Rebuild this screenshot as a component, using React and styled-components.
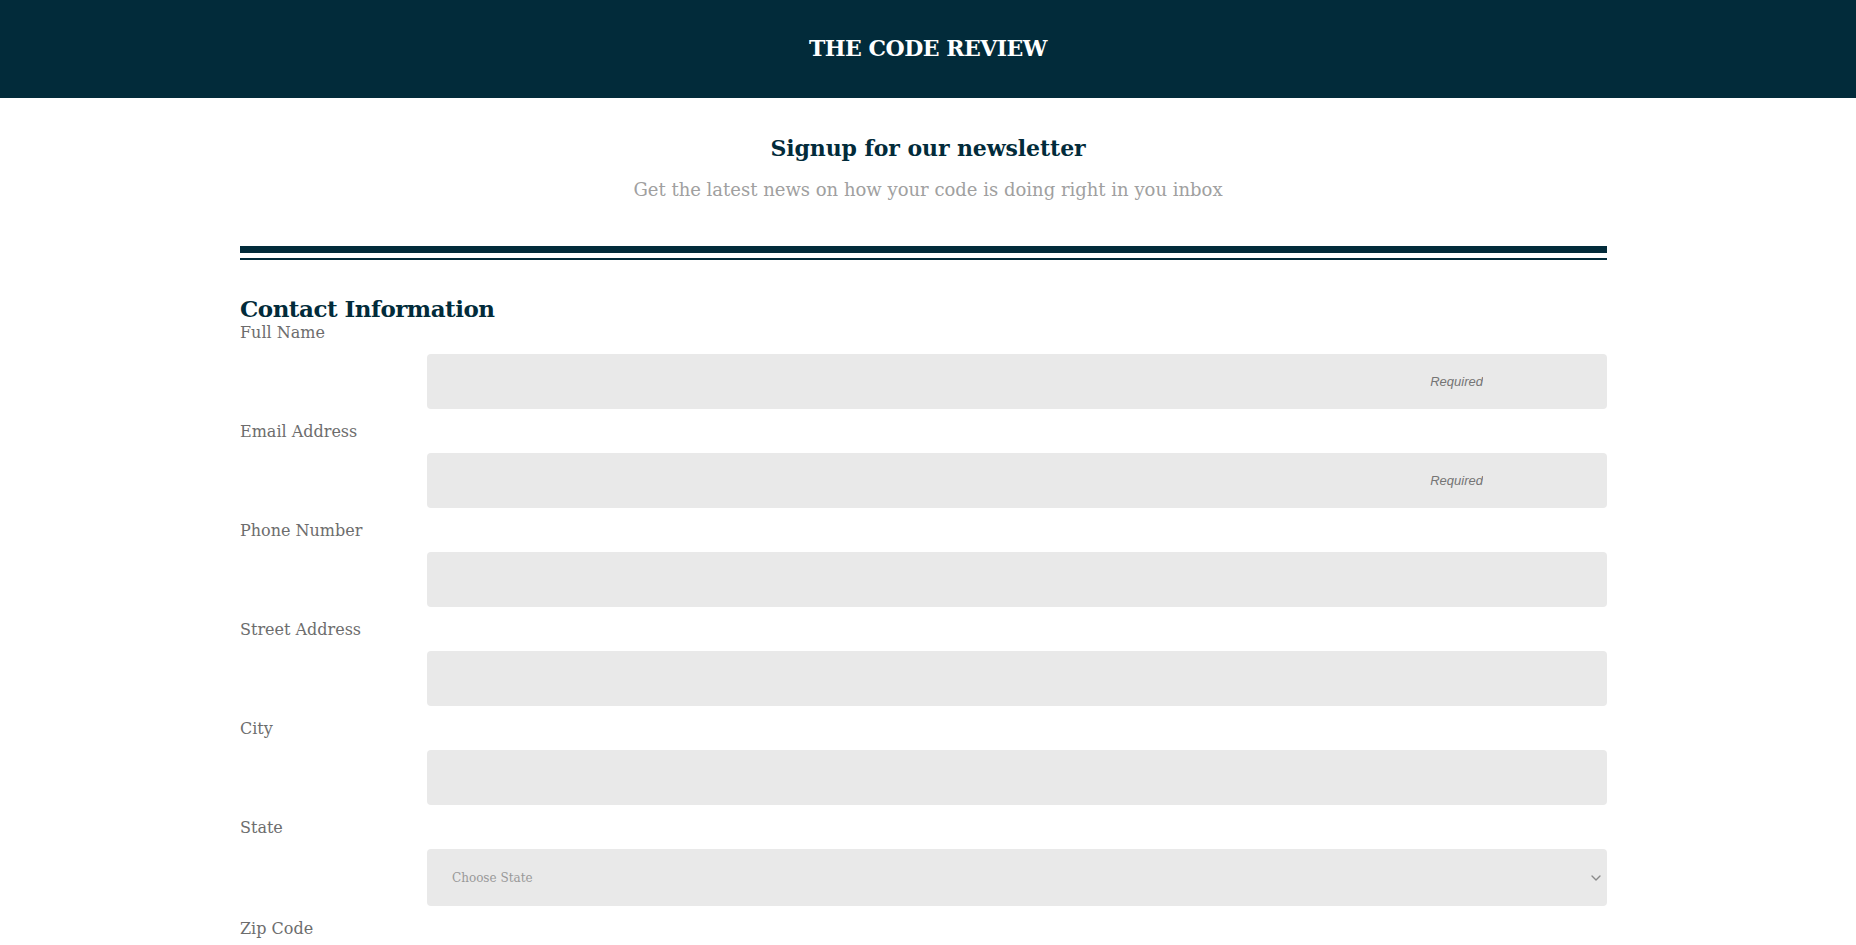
import styled, { createGlobalStyle } from "styled-components";
import { ChevronDown } from "lucide-react";

const fields = [
    { label: "Full Name", placeholder: "Required" },
    { label: "Email Address", placeholder: "Required" },
    { label: "Phone Number" },
    { label: "Street Address" },
    { label: "City" },
];

const App = () => {
    return (
        <>
            <GlobalStyle />
            <Header>
                <Brand>THE CODE REVIEW</Brand>
            </Header>

            <Intro>
                <IntroTitle>Signup for our newsletter</IntroTitle>
                <IntroText>Get the latest news on how your code is doing right in you inbox</IntroText>
            </Intro>

            <FormWrapper>
                <DoubleRule />
                <SectionTitle>Contact Information</SectionTitle>
                {fields.map((f) => (
                    <Field key={f.label}>
                        <Label>{f.label}</Label>
                        <TextInput type="text" placeholder={f.placeholder || ""} />
                    </Field>
                ))}
                <Field>
                    <Label>State</Label>
                    <SelectWrap>
                        <StateSelect defaultValue="">
                            <option value="">Choose State</option>
                        </StateSelect>
                        <Chevron size={16} strokeWidth={2} />
                    </SelectWrap>
                </Field>
                <Field>
                    <Label>Zip Code</Label>
                    <TextInput type="text" />
                </Field>
            </FormWrapper>
        </>
    );
};

const GlobalStyle = createGlobalStyle`
    body {
        margin: 0;
        font-family: "DejaVu Serif", "Liberation Serif", serif;
        background: #fff;
    }
`;

const Header = styled.header`
    height: 98px;
    background-color: #022b3a;
    display: flex;
    justify-content: center;
    align-items: center;
`;

const Brand = styled.h1`
    margin: 0 0 2px;
    color: #fff;
    font-size: 22px;
    font-weight: 700;
    letter-spacing: -0.5px;
`;

const Intro = styled.section`
    display: flex;
    flex-direction: column;
    align-items: center;
    padding-top: 36px;
`;

const IntroTitle = styled.h2`
    margin: 0;
    color: #022b3a;
    font-size: 22px;
    line-height: 28px;
    font-weight: 700;
    letter-spacing: -0.1px;
`;

const IntroText = styled.p`
    margin: 16px 0 0;
    color: #a0a0a0;
    font-size: 18px;
    line-height: 24px;
`;

const FormWrapper = styled.main`
    width: 1367px;
    margin-left: calc(50% - 688px);
    margin-top: 44px;
    display: flex;
    flex-direction: column;
`;

const DoubleRule = styled.div`
    height: 5px;
    border-top: 7px solid #022b3a;
    border-bottom: 2px solid #022b3a;
`;

const SectionTitle = styled.h2`
    margin: 37px 0 0;
    color: #022b3a;
    font-size: 23px;
    line-height: 24px;
    font-weight: 700;
    letter-spacing: -0.5px;
`;

const Field = styled.div`
    display: flex;
    flex-direction: column;
`;

const Label = styled.label`
    color: #6d6d6d;
    font-size: 16px;
    line-height: 24px;
    margin-bottom: 9px;
    ${Field} + ${Field} & {
        margin-top: 11px;
    }
`;

const TextInput = styled.input`
    align-self: flex-end;
    width: 1180px;
    height: 55px;
    box-sizing: border-box;
    border: none;
    border-radius: 4px;
    background-color: #e9e9e9;
    padding: 0 124px 0 25px;
    text-align: right;
    font-family: "Liberation Sans", Arial, sans-serif;
    font-size: 13px;
    outline: none;

    &::placeholder {
        color: #757575;
        font-style: italic;
    }
`;

const SelectWrap = styled.div`
    align-self: flex-end;
    width: 1180px;
    position: relative;
`;

const StateSelect = styled.select`
    width: 100%;
    height: 57px;
    box-sizing: border-box;
    border: none;
    border-radius: 4px;
    background-color: #e9e9e9;
    padding: 0 25px;
    appearance: none;
    color: #999;
    font-family: "DejaVu Serif", serif;
    font-size: 12px;
    outline: none;
`;

const Chevron = styled(ChevronDown)`
    position: absolute;
    right: 3px;
    top: 50%;
    transform: translateY(-50%);
    color: #8a8a8a;
    pointer-events: none;
`;

export default App;
